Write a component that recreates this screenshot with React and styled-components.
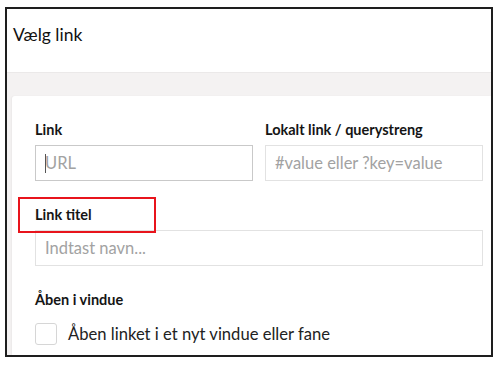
import styled, { createGlobalStyle } from 'styled-components';

const GlobalStyle = createGlobalStyle`
  html, body {
    margin: 0;
    padding: 0;
    background: #fff;
  }
  body {
    font-family: Lato, 'Noto Sans', sans-serif;
    color: #1b264f;
  }
`;

const Page = styled.div`
  padding: 7px 0 0 5px;
  height: 368px;
  box-sizing: border-box;
`;

const Frame = styled.div`
  width: 488px;
  height: 350px;
  box-sizing: border-box;
  border: 2px solid #1e1e1e;
  overflow: hidden;
  display: flex;
  flex-direction: column;
`;

const Header = styled.div`
  height: 64px;
  flex-shrink: 0;
  display: flex;
  align-items: center;
  padding: 0 6px 12px;
  box-sizing: border-box;
  border-bottom: 1px solid #ebe9e9;
  font-size: 17.5px;
  color: #111;
`;

const Body = styled.div`
  flex: 1;
  background: #f4f2f2;
  padding: 23px 0 0 5px;
`;

const Card = styled.div`
  background: #fff;
  height: 100%;
  border-radius: 3px 0 0 0;
  padding: 24px 8px 0 23px;
  box-sizing: border-box;
  box-shadow: -1px 0 2px rgba(0, 0, 0, 0.04);
`;

const Row = styled.div`
  display: grid;
  grid-template-columns: 218px 218px;
  column-gap: 12px;
`;

const Group = styled.div`
  display: flex;
  flex-direction: column;
  margin-top: ${(p) => (p.$first ? '0' : '24px')};
`;

const Label = styled.div`
  position: relative;
  font-size: 14.5px;
  font-weight: 700;
  line-height: 20px;
  color: #151515;
  margin-bottom: ${(p) => (p.$tight ? '0' : '5px')};
`;

const Highlight = styled.span`
  position: absolute;
  z-index: 2;
  left: -17px;
  top: -8px;
  width: 138px;
  height: 36px;
  box-sizing: border-box;
  border: 2px solid #e8141c;
  pointer-events: none;
`;

const FieldWrap = styled.div`
  position: relative;
  width: ${(p) => p.$width || '100%'};
`;

const Input = styled.input`
  width: 100%;
  height: 36px;
  box-sizing: border-box;
  border: 1px solid ${(p) => (p.$focused ? '#c9c9c9' : '#e2e2e2')};
  border-radius: 0;
  padding: 0 9px;
  font-family: Lato, 'Noto Sans', sans-serif;
  font-size: 16.5px;
  color: #333;
  outline: none;

  &::placeholder {
    color: #a2a2a2;
  }
`;

const Caret = styled.span`
  position: absolute;
  left: 10px;
  top: 9px;
  width: 1px;
  height: 19px;
  background: #555;
`;

const CheckRow = styled.label`
  display: flex;
  align-items: center;
  gap: 11px;
  margin-top: 13px;
  font-size: 16.6px;
  color: #222;
`;

const Box = styled.span`
  width: 22px;
  height: 22px;
  box-sizing: border-box;
  border: 1px solid #d6d6d6;
  border-radius: 3px;
  background: #fff;
`;

function Field({ placeholder, focused }) {
  return (
    <FieldWrap>
      <Input placeholder={placeholder} $focused={focused} readOnly />
      {focused && <Caret />}
    </FieldWrap>
  );
}

export default function App() {
  return (
    <>
      <GlobalStyle />
      <Page>
        <Frame>
          <Header>Vælg link</Header>
          <Body>
            <Card>
              <Row>
                <Group $first>
                  <Label>Link</Label>
                  <Field placeholder="URL" focused />
                </Group>
                <Group $first>
                  <Label>Lokalt link / querystreng</Label>
                  <Field placeholder="#value eller ?key=value" />
                </Group>
              </Row>

              <Group>
                <Label>
                  Link titel
                  <Highlight />
                </Label>
                <FieldWrap $width="448px">
                  <Input placeholder="Indtast navn..." readOnly />
                </FieldWrap>
              </Group>

              <Group>
                <Label $tight>Åben i vindue</Label>
                <CheckRow>
                  <Box />
                  Åben linket i et nyt vindue eller fane
                </CheckRow>
              </Group>
            </Card>
          </Body>
        </Frame>
      </Page>
    </>
  );
}
